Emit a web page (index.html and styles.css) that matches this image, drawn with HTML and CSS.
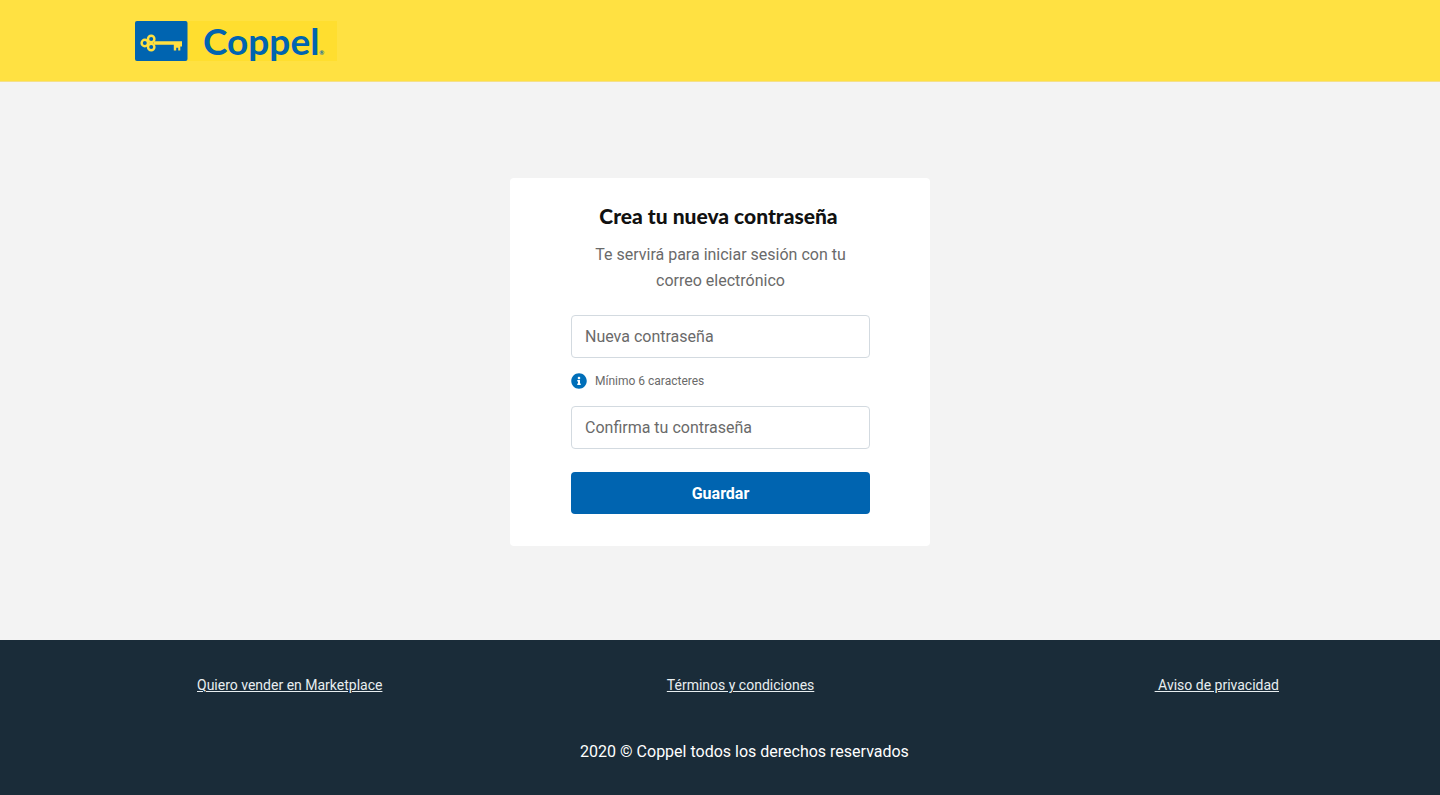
FILE: index.html
```html
<!DOCTYPE html>
<html lang="es">
<head>
<meta charset="utf-8">
<meta name="viewport" content="width=device-width, initial-scale=1">
<title>Crea tu nueva contraseña</title>
<link rel="stylesheet" href="styles.css">
</head>
<body>
<header class="header">
  <div class="header-inner">
    <a class="logo" href="#" aria-label="Coppel">
      <svg class="logo-key" viewBox="0 0 53 40" aria-hidden="true">
        <rect width="52.500" height="40" rx="2" fill="#0064b0"/>
        <g fill="none" stroke="#ffe040" stroke-width="2.400">
          <circle cx="9.800" cy="22" r="3.200"/>
          <circle cx="16.200" cy="17.900" r="3.200"/>
          <circle cx="16.200" cy="26.100" r="3.200"/>
        </g>
        <path fill="#ffe040" d="M18.500 20.200H47V25.600H45.300V29.500H43.200V26.800H41.200V29.500H38.800V23.700H18.500Z"/>
      </svg>
      <span class="logo-word">Coppel<small class="logo-mark">®</small></span>
    </a>
  </div>
</header>
<main class="main">
  <form class="card">
    <h1 class="title">Crea tu nueva contraseña</h1>
    <p class="subtitle">Te servirá para iniciar sesión con tu correo electrónico</p>
    <input class="field" type="password" placeholder="Nueva contraseña" aria-label="Nueva contraseña">
    <p class="hint">
      <svg class="hint-icon" viewBox="0 0 512 512" aria-hidden="true">
        <path fill="#006fb9" d="M256 8C119 8 8 119.100 8 256c0 137 111 248 248 248s248-111 248-248C504 119.100 393 8 256 8zm0 110c23.200 0 42 18.800 42 42s-18.800 42-42 42-42-18.800-42-42 18.800-42 42-42zm56 254c0 6.600-5.400 12-12 12h-88c-6.600 0-12-5.400-12-12v-24c0-6.600 5.400-12 12-12h12v-64h-12c-6.600 0-12-5.400-12-12v-24c0-6.600 5.400-12 12-12h64c6.600 0 12 5.400 12 12v100h12c6.600 0 12 5.400 12 12v24z"/>
      </svg>
      <span>Mínimo 6 caracteres</span>
    </p>
    <input class="field" type="password" placeholder="Confirma tu contraseña" aria-label="Confirma tu contraseña">
    <button class="submit" type="submit">Guardar</button>
  </form>
</main>
<footer class="footer">
  <nav class="links">
    <a class="link" href="#">Quiero vender en Marketplace</a>
    <a class="link" href="#">Términos y condiciones</a>
    <a class="link" href="#">&nbsp;Aviso de privacidad</a>
  </nav>
  <p class="copyright">2020 © Coppel todos los derechos reservados</p>
</footer>
</body>
</html>
```
FILE: styles.css
```css
* {
  box-sizing: border-box;
}

body {
  margin: 0;
  min-height: 100vh;
  display: flex;
  flex-direction: column;
  background: #f3f3f3;
  color: #6a6a6a;
  font-family: Roboto, "Liberation Sans", sans-serif;
  font-size: 16px;
}

.header {
  padding: 21px 24px 20px;
  background: #ffe142;
  border-bottom: 1px solid #f5e08a;
}

.header-inner {
  max-width: 1170px;
  margin: 0 auto;
}

.logo {
  display: inline-flex;
  width: 202px;
  height: 40px;
  vertical-align: top;
  background: #ffde2f;
  color: #0064b0;
  text-decoration: none;
}

.logo-key {
  width: 53px;
  height: 40px;
}

.logo-word {
  padding-left: 15px;
  font-family: Lato, sans-serif;
  font-size: 37px;
  font-weight: 700;
  line-height: 40px;
}

.logo-mark {
  font-size: 6px;
}

.main {
  flex: 1;
  display: flex;
  align-items: center;
  justify-content: center;
  padding: 26px 16px 24px;
}

.card {
  width: 100%;
  max-width: 420px;
  padding: 24px 60px 32px 61px;
  border-radius: 4px;
  background: #fff;
}

.title {
  margin: 0 0 12px;
  padding-right: 4px;
  color: #111;
  font-family: Lato, sans-serif;
  font-size: 21px;
  font-weight: 900;
  line-height: 28px;
  text-align: center;
}

.subtitle {
  margin: 0 0 21px;
  line-height: 26px;
  text-align: center;
}

.field {
  display: block;
  width: 100%;
  height: 43px;
  padding: 0 13px;
  border: 1px solid #d3dae0;
  border-radius: 4px;
  background: #fff;
  color: #333;
  font: inherit;
}

.field::placeholder {
  color: #6a6a6a;
  opacity: 1;
}

.hint {
  display: flex;
  align-items: center;
  gap: 8px;
  margin: 15px 0 17px;
  font-size: 12px;
  line-height: 16px;
}

.hint-icon {
  width: 16px;
  height: 16px;
}

.submit {
  display: block;
  width: 100%;
  height: 42px;
  margin-top: 23px;
  border: 0;
  border-radius: 4px;
  background: #0064b0;
  color: #fff;
  font: inherit;
  font-weight: 700;
}

.footer {
  padding: 35px 24px 31px;
  background: #1a2c39;
}

.links {
  display: grid;
  grid-template-columns: 470fr 488fr auto;
  max-width: 1118px;
  margin: 0 auto;
  padding-left: 36px;
}

.link {
  justify-self: start;
  color: #e8eef0;
  font-size: 14px;
  line-height: 20px;
}

.copyright {
  margin: 45px 0 0;
  padding-left: 49px;
  color: #fff;
  line-height: 24px;
  text-align: center;
}
```
